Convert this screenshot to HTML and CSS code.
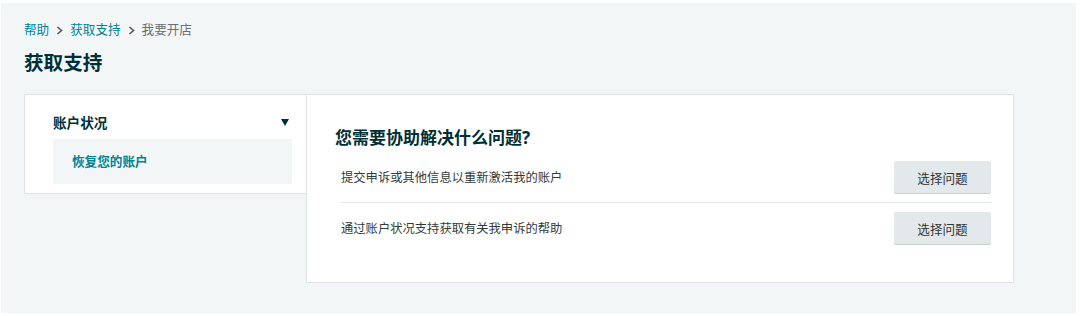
FILE: index.html
```html
<!doctype html>
<html>
<head>
<meta charset="utf-8">
<title>获取支持</title>
<link rel="stylesheet" href="styles.css">
</head>
<body>
<div class="page">
	<div class="crumb">
		<a href="#">帮助</a>
		<svg class="sep" width="7" height="9" viewBox="0 0 7 9"><polyline points="1.5,1 5.5,4.5 1.5,8" fill="none" stroke="#555" stroke-width="1.6"/></svg>
		<a href="#">获取支持</a>
		<svg class="sep" width="7" height="9" viewBox="0 0 7 9"><polyline points="1.5,1 5.5,4.5 1.5,8" fill="none" stroke="#555" stroke-width="1.6"/></svg>
		<span class="cur">我要开店</span>
	</div>
	<h1 class="title">获取支持</h1>
	<div class="main">
		<div class="side">
			<div class="side-head">
				<span>账户状况</span>
				<span class="tri"></span>
			</div>
			<div class="side-item">恢复您的账户</div>
		</div>
		<div class="panel">
			<h2>您需要协助解决什么问题?</h2>
			<ul class="rows">
				<li>
					<span>提交申诉或其他信息以重新激活我的账户</span>
					<button class="btn">选择问题</button>
				</li>
				<li>
					<span>通过账户状况支持获取有关我申诉的帮助</span>
					<button class="btn">选择问题</button>
				</li>
			</ul>
		</div>
	</div>
</div>
</body>
</html>
```
FILE: styles.css
```css
body,h1,h2,ul,li{margin:0;padding:0;}
li{ list-style:none;}
a{ text-decoration:none; color:#008296;}
body{ font-family:"Noto Sans","Noto Sans CJK SC",sans-serif; background:#fff; color:#333;}

.page{ margin:3px 4px 3px 1px; height:310px; background:#f3f6f6; padding:17px 62px 0 23px; box-sizing:border-box;}
.crumb{ display:flex; align-items:center; height:20px; font-size:12.6px; line-height:20px;}
.crumb .sep{ margin:0 7px;}
.crumb .cur{ color:#6a6f70;}
.title{ margin-top:9px; font-size:19.6px; line-height:28px; font-weight:bold; color:#002f36;}

.main{ display:flex; align-items:flex-start; margin-top:17px;}
.side{ width:283px; box-sizing:border-box; background:#fff; border:1px solid #dfe3e4; padding:11px 14px 9px 28px;}
.side-head{ display:flex; justify-content:space-between; align-items:center; height:33px; padding-bottom:1px; box-sizing:border-box; font-size:13.6px; font-weight:bold; color:#002f36;}
.tri{ width:0; height:0; border-left:4.5px solid transparent; border-right:4.5px solid transparent; border-top:7px solid #002f36; margin-right:3px;}
.side-item{ height:45px; line-height:45px; background:#f3f6f6; padding-left:19px; font-size:12.6px; font-weight:bold; color:#008296;}

.panel{ flex:1; margin-left:-1px; background:#fff; border:1px solid #dfe3e4; padding:31px 22px 28px 28px; height:189px; box-sizing:border-box;}
.panel h2{ font-size:17px; line-height:24px; font-weight:bold; color:#002f36;}
.rows{ margin:4px 0 0 6px;}
.rows li{ display:flex; justify-content:space-between; align-items:center; padding:8px 0; font-size:12.3px; color:#333a3b;}
.rows li:first-child{ padding:7px 0 9px;}
.rows li+li{ border-top:1px solid #e3e6e6; padding-top:9px;}
.btn{ width:97px; height:32px; border:none; border-radius:2px; background:#e3e9ea; box-shadow:0 1px 0 #c8cfd0; font-family:inherit; font-size:12.6px; color:#333;}
```
